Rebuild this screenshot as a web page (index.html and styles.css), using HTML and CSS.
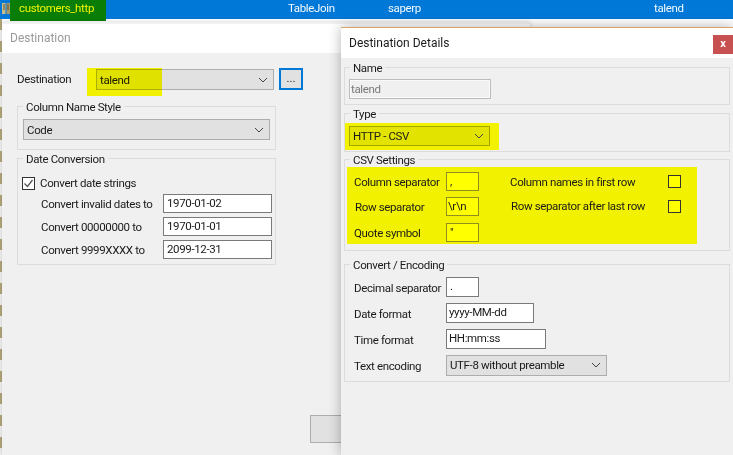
FILE: index.html
```html
<!DOCTYPE html>
<html lang="en">
<head>
<meta charset="utf-8">
<title>Destination Details</title>
<link rel="stylesheet" href="styles.css">
</head>
<body>
<div class="desktop">
  <div class="list-row">
    <svg class="row-icon" width="8" height="13" viewBox="0 0 8 13"><path d="M0 1h3.5v11H0z" fill="#c9bd8c"/><path d="M4.5 1H8v11H4.5z" fill="#a89a6a"/><path d="M1 3h2M1 5h2M1 7h2M5 3h2M5 5h2M5 7h2" stroke="#5d5433"/></svg>
    <div class="row-name">customers_http</div>
    <div class="cell cell-type">TableJoin</div>
    <div class="cell cell-source">saperp</div>
    <div class="cell cell-dest">talend</div>
  </div>
  <div class="strip"></div>

  <section class="win win-dest">
    <header class="win-title muted">Destination</header>
    <div class="win-body dest-body">
      <div class="dest-row">
        <span class="dest-label">Destination</span>
        <div class="select dest-select">
          <span>talend</span>
          <svg class="chev" width="10" height="6" viewBox="0 0 10 6"><path d="M1 1l4 4 4-4" fill="none" stroke="#444"/></svg>
          <span class="mark"></span>
        </div>
        <button class="dots">...</button>
      </div>
      <fieldset class="group left-group style-group">
        <legend>Column Name Style</legend>
        <div class="select style-select">
          <span>Code</span>
          <svg class="chev" width="10" height="6" viewBox="0 0 10 6"><path d="M1 1l4 4 4-4" fill="none" stroke="#444"/></svg>
        </div>
      </fieldset>
      <fieldset class="group left-group date-group">
        <legend>Date Conversion</legend>
        <label class="check-row">
          <svg class="box" width="13" height="13" viewBox="0 0 13 13"><rect x=".5" y=".5" width="12" height="12" fill="#fff" stroke="#333"/><path d="M2.5 6.5l3 3 5-6.5" fill="none" stroke="#555" stroke-width="1.3"/></svg>
          <span>Convert date strings</span>
        </label>
        <div class="date-grid">
          <span>Convert invalid dates to</span><div class="input">1970-01-02</div>
          <span>Convert 00000000 to</span><div class="input">1970-01-01</div>
          <span>Convert 9999XXXX to</span><div class="input">2099-12-31</div>
        </div>
      </fieldset>
      <div class="footer-btn"></div>
    </div>
  </section>

  <section class="win win-detail">
    <header class="win-title">
      <span>Destination Details</span>
      <span class="close">x</span>
    </header>
    <div class="win-body detail-body">
      <fieldset class="group name-group">
        <legend>Name</legend>
        <div class="input input-off">talend</div>
      </fieldset>
      <fieldset class="group type-group">
        <legend>Type</legend>
        <div class="type-mark">
          <div class="select type-select">
            <span>HTTP - CSV</span>
            <svg class="chev" width="10" height="6" viewBox="0 0 10 6"><path d="M1 1l4 4 4-4" fill="none" stroke="#444"/></svg>
          </div>
        </div>
      </fieldset>
      <fieldset class="group csv-group">
        <legend>CSV Settings</legend>
        <div class="csv-mark">
          <span class="c1">Column separator</span><div class="input yel">,</div>
          <span class="c3">Column names in first row</span><span class="ybox"></span>
          <span class="c1 shift">Row separator</span><div class="input yel tight">\r\n</div>
          <span class="c3 shift lift">Row separator after last row</span><span class="ybox"></span>
          <span class="c1">Quote symbol</span><div class="input yel">"</div>
        </div>
      </fieldset>
      <fieldset class="group conv-group">
        <legend>Convert / Encoding</legend>
        <div class="conv-grid">
          <span>Decimal separator</span><div class="input w-dec">.</div>
          <span>Date format</span><div class="input w-date">yyyy-MM-dd</div>
          <span>Time format</span><div class="input w-time">HH:mm:ss</div>
          <span>Text encoding</span>
          <div class="select w-enc">
            <span>UTF-8 without preamble</span>
            <svg class="chev" width="10" height="6" viewBox="0 0 10 6"><path d="M1 1l4 4 4-4" fill="none" stroke="#444"/></svg>
          </div>
        </div>
      </fieldset>
    </div>
  </section>
</div>
</body>
</html>
```

FILE: styles.css
```css
* { box-sizing: border-box; }
html, body { margin: 0; padding: 0; }
body {
  width: 733px;
  height: 455px;
  overflow: hidden;
  background: #fff;
  font: 11.5px/16px Roboto, "Liberation Sans", sans-serif;
  letter-spacing: -.36px;
  color: #1a1a1a;
}
.desktop { position: relative; width: 733px; height: 455px; overflow: hidden; }

.list-row {
  display: flex;
  align-items: flex-start;
  height: 19px;
  background: #0078d7;
  color: #f4f9fd;
  line-height: 17px;
}
.row-icon { margin: 2px 0 0 2px; flex: none; }
.row-name {
  width: 96px;
  height: 21px;
  background: #0a7d06;
  color: #eef500;
  padding-left: 9px;
  flex: none;
}
.cell { flex: none; }
.cell-type { width: 100px; margin-left: 182px; }
.cell-source { width: 266px; }
.cell-dest { width: 60px; }

.strip {
  position: absolute;
  left: 0;
  top: 19px;
  width: 2px;
  height: 436px;
  background: repeating-linear-gradient(#b3a67a 0 11px, #f2f2f2 11px 22px);
}

.win { position: absolute; background: #f0f0f0; }
.win-title {
  display: flex;
  justify-content: space-between;
  background: #fff;
  font-size: 12px;
  letter-spacing: 0;
}
.win-dest {
  left: 2px;
  top: 22px;
  width: 528px;
  height: 433px;
  box-shadow: 0 0 4px rgba(0, 0, 0, .2);
}
.win-dest .win-title {
  height: 31px;
  padding: 6px 0 0 8px;
  border-top: 2px solid #f1f1f1;
}
.muted { color: #9a9a9a; }
.dest-body { padding: 15px 0 0 15px; }
.dest-row { display: flex; align-items: flex-start; height: 30px; }
.dest-label { width: 79px; padding-top: 3px; }

.select {
  display: flex;
  align-items: center;
  justify-content: space-between;
  background: #e1e1e1;
  border: 1px solid #adadad;
  padding: 0 5px 0 3px;
  height: 21px;
  position: relative;
}
.select span { position: relative; }
.chev { flex: none; position: relative; }
.dest-select { width: 178px; margin-top: 1px; }
.select .mark {
  position: absolute;
  left: -10px;
  top: -2px;
  width: 75px;
  height: 28px;
  background: #ffff00;
  mix-blend-mode: multiply;
}
.dots {
  width: 24px;
  height: 22px;
  margin: 0 0 0 5px;
  padding: 0 0 4px;
  background: #e1e1e1;
  border: 2px solid #0078d7;
  font: inherit;
  color: #1a1a1a;
}

.group {
  margin: 0;
  min-width: 0;
  padding: 0;
  border: 1px solid #dcdcdc;
}
.group legend {
  position: relative;
  top: 1px;
  padding: 0 3px;
  margin-left: 5px;
  line-height: 16px;
}
.left-group { width: 259px; }
.style-group { height: 52px; padding-top: 5px; }
.style-select { width: 247px; margin-left: 5px; }
.date-group { height: 115px; padding-top: 10px; }
.check-row { display: flex; align-items: center; gap: 5px; height: 14px; margin-left: 4px; }
.check-row .box { flex: none; }
.date-grid {
  display: grid;
  grid-template-columns: 122px 109px;
  grid-auto-rows: 19px;
  row-gap: 4px;
  margin: 4px 0 0 23px;
  align-items: center;
}
.input {
  background: #fff;
  border: 1px solid #7a7a7a;
  height: 19px;
  line-height: 17px;
  padding: 0 3px;
}
.footer-btn {
  width: 60px;
  height: 28px;
  margin: 150px 0 0 293px;
  background: #e1e1e1;
  border: 1px solid #adadad;
}

.win-detail {
  left: 341px;
  top: 27px;
  width: 392px;
  height: 428px;
  border-top: 1px solid #d9a56b;
  box-shadow: 0 0 12px rgba(0, 0, 0, .3);
}
.win-detail .win-title {
  height: 30px;
  padding: 7px 0 0 8px;
}
.close {
  width: 20px;
  height: 19px;
  background: #c75050;
  color: #fff;
  font-weight: 700;
  font-size: 11px;
  line-height: 17px;
  text-align: center;
}
.detail-body { padding: 1px 3px 0 3px; }
.name-group { height: 46px; padding-top: 4px; }
.input-off {
  width: 142px;
  height: 20px;
  margin-left: 4px;
  padding: 0 1px;
  color: #7a7a7a;
  background: #f0f0f0;
  border: 1px solid #bcbcbc;
  line-height: 19px;
  box-shadow: inset 0 0 0 1px #fafafa;
}
.type-group { height: 47px; padding-top: 2px; }
.type-mark { width: 154px; height: 27px; padding: 3px 4px; background: #f2f200; }
.type-select {
  width: 141px;
  height: 20px;
  background: #e3e300;
  border-color: #a5a500;
}
.csv-group { height: 100px; margin-top: -1px; }
.csv-mark {
  display: grid;
  grid-template-columns: 92px 33px 31px 158px 13px;
  grid-template-rows: 25px 26px 19px;
  width: 350px;
  height: 77px;
  margin-left: 2px;
  padding: 5px 0 0 7px;
  background: #f2f200;
}
.csv-mark span { line-height: 20px; height: 19px; }
.c1 { grid-column: 1; }
.c3 { grid-column: 3 / 5; padding-left: 31px; }
.c1.shift { padding-left: 1px; }
.c3.shift { padding-left: 32px; }
.lift { margin-top: -1px; }
.yel {
  background: #ffff00;
  border-color: #8f8f20;
}
.tight { padding: 0 1px; }
.csv-mark .ybox {
  width: 13px;
  height: 13px;
  margin-top: 3px;
  background: #ffff00;
  border: 1px solid #333;
}
.conv-group { height: 126px; margin-top: 5px; padding-top: 5px; }
.conv-grid {
  display: grid;
  grid-template-columns: 92px auto;
  grid-auto-rows: 20px;
  row-gap: 6px;
  margin-left: 9px;
  align-items: center;
  justify-items: start;
}
.conv-grid > span { padding-top: 1px; }
.conv-grid .input { height: 20px; }
.w-dec { width: 33px; }
.w-date { width: 88px; padding: 0 2px; }
.w-time { width: 100px; padding: 0 2px; }
.w-enc { width: 161px; height: 21px; }
```
